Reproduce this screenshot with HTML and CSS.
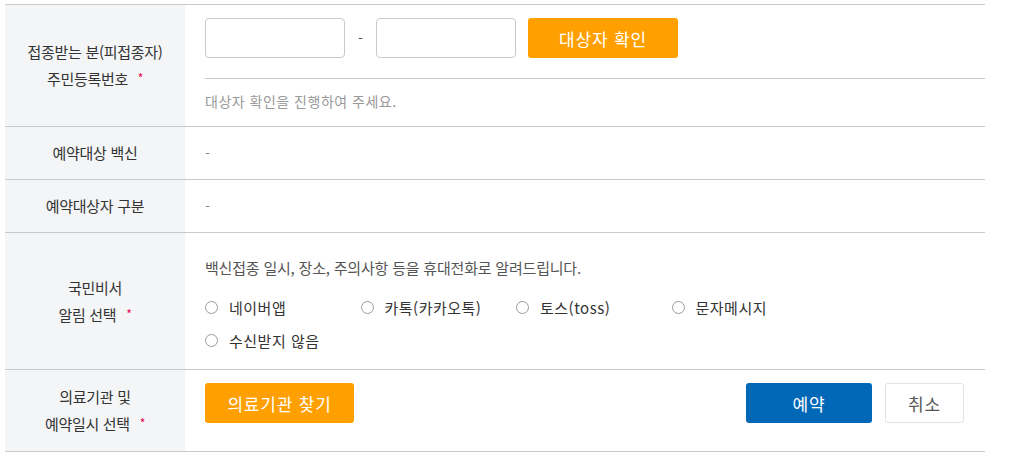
FILE: index.html
```html
<!DOCTYPE html>
<html lang="ko">
<head>
<meta charset="utf-8">
<link rel="stylesheet" href="styles.css">
</head>
<body>
<div class="form">
  <div class="row row-id">
    <div class="label"><span>접종받는 분(피접종자)</span><span>주민등록번호 <i class="req">*</i></span></div>
    <div class="value">
      <div class="id-line">
        <input class="inp" type="text">
        <span class="dash">-</span>
        <input class="inp" type="text">
        <button class="btn btn-orange btn-check">대상자 확인</button>
      </div>
      <div class="hint">대상자 확인을 진행하여 주세요.</div>
    </div>
  </div>
  <div class="row row-simple">
    <div class="label"><span>예약대상 백신</span></div>
    <div class="value plain">-</div>
  </div>
  <div class="row row-simple">
    <div class="label"><span>예약대상자 구분</span></div>
    <div class="value plain">-</div>
  </div>
  <div class="row row-notice">
    <div class="label"><span>국민비서</span><span>알림 선택 <i class="req">*</i></span></div>
    <div class="value">
      <p class="notice">백신접종 일시, 장소, 주의사항 등을 휴대전화로 알려드립니다.</p>
      <div class="radios">
        <label class="radio"><span class="dot"></span>네이버앱</label>
        <label class="radio"><span class="dot"></span>카톡(카카오톡)</label>
        <label class="radio"><span class="dot"></span>토스(toss)</label>
        <label class="radio"><span class="dot"></span>문자메시지</label>
        <label class="radio"><span class="dot"></span>수신받지 않음</label>
      </div>
    </div>
  </div>
  <div class="row row-hosp">
    <div class="label"><span>의료기관 및</span><span>예약일시 선택 <i class="req">*</i></span></div>
    <div class="value hosp">
      <button class="btn btn-orange btn-find">의료기관 찾기</button>
      <div class="actions">
        <button class="btn btn-blue">예약</button>
        <button class="btn btn-white">취소</button>
      </div>
    </div>
  </div>
</div>
</body>
</html>
```
FILE: styles.css
```css
* { box-sizing: border-box; }
html, body { margin: 0; padding: 0; background: #fff; }
body {
  font-family: "Noto Sans CJK KR", "Noto Sans", sans-serif;
  color: #333;
  font-size: 14px;
}
.form {
  width: 980px;
  margin: 4px 0 0 5px;
  border-top: 1px solid #c8c9ce;
}
.row {
  display: flex;
  border-bottom: 1px solid #c8c9ce;
}
.label {
  width: 180px;
  flex: none;
  background: #f4f5f7;
  display: flex;
  flex-direction: column;
  justify-content: center;
  align-items: center;
  font-size: 15px;
  line-height: 26px;
  color: #333;
  letter-spacing: -0.3px;
}
.req {
  font-style: normal;
  color: #e8004c;
  font-size: 12px;
  margin-left: 6px;
  vertical-align: 2px;
}
.value {
  flex: 1;
  padding-left: 20px;
}
.row-id { height: 122px; }
.row-id .value { padding-top: 13px; }
.id-line {
  display: flex;
  align-items: center;
  height: 40px;
}
.inp {
  width: 140px;
  height: 40px;
  border: 1px solid #c8c9ce;
  border-radius: 4px;
  margin: 0;
  padding: 0 10px;
  font: inherit;
}
.dash {
  width: 31px;
  text-align: center;
  color: #555;
  font-size: 14px;
}
.btn {
  height: 40px;
  border: 0;
  border-radius: 3px;
  font-family: inherit;
  padding: 0;
  cursor: pointer;
  font-size: 17px;
  letter-spacing: 0.8px;
}
.btn-orange {
  background: #ff9f00;
  color: #fff;
  width: 150px;
}
.btn-check { margin-left: 12px; }
.hint {
  margin-top: 20px;
  border-top: 1px solid #c8c9ce;
  height: 47px;
  line-height: 45px;
  font-size: 14px;
  letter-spacing: 0.5px;
  color: #999;
}
.row-simple { height: 53px; }
.value.plain {
  display: flex;
  align-items: center;
  color: #888;
}
.row-notice { height: 137px; }
.row-notice .value { padding-top: 24px; }
.notice {
  margin: 0;
  line-height: 22px;
  color: #555;
  font-size: 15px;
  letter-spacing: -0.2px;
}
.radios {
  display: grid;
  grid-template-columns: repeat(4, 155.5px);
  margin-top: 12px;
}
.radio {
  display: flex;
  align-items: center;
  height: 33px;
  color: #333;
  font-size: 15px;
  letter-spacing: 0.5px;
}
.dot {
  width: 13px;
  height: 13px;
  border: 1px solid #9a9a9a;
  border-radius: 50%;
  margin-right: 11px;
  flex: none;
}
.row-hosp { height: 82px; }
.value.hosp {
  display: flex;
  justify-content: space-between;
  align-items: flex-start;
  padding-top: 13px;
  padding-right: 21px;
}
.btn-find { width: 149px; }
.actions {
  display: flex;
  gap: 13px;
}
.btn-blue {
  width: 126px;
  background: #0068b7;
  color: #fff;
}
.btn-white {
  width: 79px;
  background: #fff;
  border: 1px solid #e1e3e8;
  color: #555;
}
```
